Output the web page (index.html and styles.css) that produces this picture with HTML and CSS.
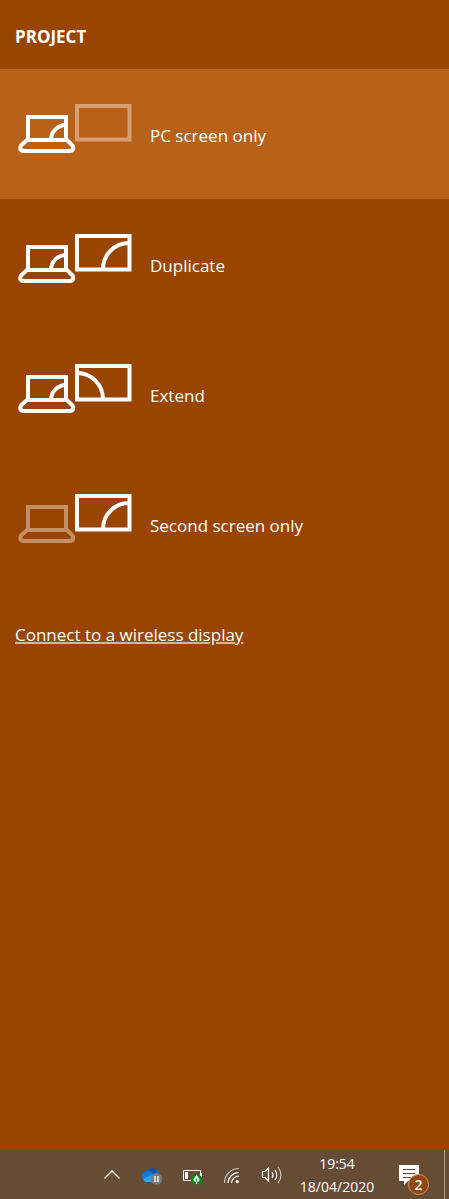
FILE: index.html
```html
<!DOCTYPE html>
<html lang="en">
<head>
<meta charset="utf-8">
<meta name="viewport" content="width=device-width, initial-scale=1">
<title>Project</title>
<link rel="stylesheet" href="styles.css">
</head>
<body>
<svg class="defs" aria-hidden="true">
  <symbol id="laptop" viewBox="5 4 120 70">
    <path d="M18 45V22H56V45"/>
    <path d="M17 45H57L62.500 50.500Q65 56 59 56H14.500Q8.500 56 11 50.500Z"/>
  </symbol>
  <symbol id="laptop-arc" viewBox="5 4 120 70"><path d="M56 30A15 15 0 0 0 41 45"/></symbol>
  <symbol id="monitor" viewBox="5 4 120 70"><path d="M67 11H119.500V44.500H67Z"/></symbol>
  <symbol id="arc-right" viewBox="5 4 120 70"><path d="M119 18A26 26 0 0 0 93 44"/></symbol>
  <symbol id="arc-left" viewBox="5 4 120 70"><path d="M67 18A26 26 0 0 1 93 44"/></symbol>
</svg>
<main class="panel">
  <h1 class="title">PROJECT</h1>
  <div class="modes">
    <button class="mode selected" type="button" aria-pressed="true">
      <svg class="mode-icon" viewBox="0 0 120 70" aria-hidden="true"><use href="#laptop"/><use href="#laptop-arc"/><use class="dim" href="#monitor"/></svg>
      <span class="mode-name">PC screen only</span>
    </button>
    <button class="mode" type="button">
      <svg class="mode-icon" viewBox="0 0 120 70" aria-hidden="true"><use href="#laptop"/><use href="#laptop-arc"/><use href="#monitor"/><use href="#arc-right"/></svg>
      <span class="mode-name">Duplicate</span>
    </button>
    <button class="mode" type="button">
      <svg class="mode-icon" viewBox="0 0 120 70" aria-hidden="true"><use href="#laptop"/><use href="#laptop-arc"/><use href="#monitor"/><use href="#arc-left"/></svg>
      <span class="mode-name">Extend</span>
    </button>
    <button class="mode" type="button">
      <svg class="mode-icon" viewBox="0 0 120 70" aria-hidden="true"><use class="dim" href="#laptop"/><use href="#monitor"/><use href="#arc-right"/></svg>
      <span class="mode-name">Second screen only</span>
    </button>
  </div>
  <a class="wireless" href="#wireless">Connect to a wireless display</a>
</main>
<footer class="taskbar">
  <div class="tray">
    <button class="tray-button" type="button" aria-label="Show hidden icons">
      <svg width="18" height="24" viewBox="0 0 18 24" fill="none" stroke="#fff" stroke-width="1.300"><path d="M1.500 15.500 9 8l7.500 7.500"/></svg>
    </button>
    <button class="tray-button" type="button" aria-label="OneDrive, paused">
      <svg width="22" height="24" viewBox="0 0 22 24">
        <path fill="#0f6cc4" d="M5 9C7 5 13 4 16 8c3 1 4 4 3 8H8z"/>
        <path fill="#0a52a5" d="M7 7c3-3 7-2 9 1l-5 5-5-4z"/>
        <path fill="#0879d5" d="M5 8c4-1 6 1 8 4l-3 6H5C0 18-1 10 5 8z"/>
        <path fill="#28a4ee" d="M2 16l8-4 6 3-2 4H5q-2 0-3-3z"/>
        <circle cx="15.500" cy="16" r="5.800" fill="#7c7c7c"/>
        <path stroke="#fff" stroke-width="1.300" d="M14 13v6M17 13v6"/>
      </svg>
    </button>
    <button class="tray-button" type="button" aria-label="Battery saver">
      <svg width="20" height="24" viewBox="0 0 20 24">
        <path fill="none" stroke="#fff" d="M.5 7.500h17v10H.5z"/>
        <path fill="#fff" d="M2 9h3v7H2zM18 10h1v4h-1z"/>
        <circle cx="13.500" cy="16.500" r="5.600" fill="#078b19"/>
        <path fill="#fff" d="M13.500 12l3 4q0 3-2.500 3v2h-1v-2q-2.500 0-2.500-3z"/>
        <path fill="#078b19" d="M13 15.500h1v3h-1z"/>
      </svg>
    </button>
    <button class="tray-button" type="button" aria-label="Wi-Fi">
      <svg width="18" height="24" viewBox="0 0 18 24" fill="none" stroke="#fff" stroke-width="1.200">
        <path stroke="#c8beb5" d="M1.500 20A14.500 14.500 0 0 1 16 5.500"/>
        <path d="M5 20A11 11 0 0 1 16 9.500M8.500 20A7.500 7.500 0 0 1 16 13"/>
        <circle cx="14.300" cy="18.500" r="1.600" fill="#fff" stroke="none"/>
      </svg>
    </button>
    <button class="tray-button" type="button" aria-label="Volume">
      <svg width="22" height="24" viewBox="0 0 22 24" fill="none" stroke="#fff" stroke-width="1.200">
        <path d="M1.500 8.500H4L7.500 5v13L4 14.500H1.500z"/>
        <path d="M11 9q2 3 0 6M14 7q3.500 5 0 10"/>
        <path stroke="#d1c9c3" d="M17 4q6 8 0 16"/>
      </svg>
    </button>
  </div>
  <div class="clock"><time>19:54</time><time datetime="2020-04-18">18/04/2020</time></div>
  <button class="notifications" type="button" aria-label="2 notifications">
    <svg width="20" height="20" viewBox="0 0 20 20"><path fill="#fff" d="M0 0h20v16H9l-4 4v-4H0z"/><path stroke="#66482f" d="M4 4.500h12M4 8.500h12M4 12.500h8"/></svg>
    <span class="badge">2</span>
  </button>
</footer>
</body>
</html>
```
FILE: styles.css
```css
* { box-sizing: border-box; }
body {
  margin: 0;
  min-height: 100vh;
  display: flex;
  flex-direction: column;
  background: #994500;
  color: #fff;
  font-family: "Segoe UI", "Open Sans", "Noto Sans", sans-serif;
}
button {
  border: 0;
  padding: 0;
  background: none;
  color: inherit;
  font: inherit;
}
.defs { position: absolute; width: 0; height: 0; }
.panel { flex: 1; }
.title {
  margin: 0;
  padding: 25px 15px 20px;
  font-size: 17px;
  line-height: 24px;
  font-weight: 700;
}
.modes { display: flex; flex-direction: column; }
.mode {
  display: flex;
  align-items: center;
  gap: 15px;
  height: 130px;
  padding: 0 15px;
  font-size: 17px;
  line-height: 24px;
  text-align: left;
}
.mode-name { padding-top: 4px; }
.selected { background: #b86118; }
.mode-icon {
  flex: none;
  width: 120px;
  height: 70px;
  fill: none;
  stroke: #fff;
  stroke-width: 4;
}
.dim { opacity: .4; }
.wireless {
  display: inline-block;
  margin: 34px 15px;
  color: #fff;
  font-size: 17px;
  line-height: 24px;
  text-decoration-color: #d6b599;
  text-decoration-thickness: 2px;
  text-underline-offset: 1px;
}
.taskbar {
  display: flex;
  align-items: center;
  justify-content: flex-end;
  gap: 15px;
  height: 49px;
  padding-right: 4px;
  background: #664b35;
}
.tray { display: flex; gap: 20px; }
.tray-button, .tray-button svg { display: block; }
.clock {
  display: flex;
  flex-direction: column;
  align-items: center;
  min-width: 78px;
  font-size: 14px;
  line-height: 23px;
}
.notifications {
  position: relative;
  display: flex;
  align-items: flex-start;
  width: 54px;
  height: 49px;
  padding: 15px 0 0 8px;
  border-right: 1px solid #a99b8f;
}
.badge {
  position: absolute;
  left: 17px;
  top: 24px;
  width: 21px;
  height: 21px;
  border: 1px solid #c99b73;
  border-radius: 50%;
  background: #944708;
  font-size: 14px;
  line-height: 19px;
  font-weight: 600;
  text-align: center;
}
```
